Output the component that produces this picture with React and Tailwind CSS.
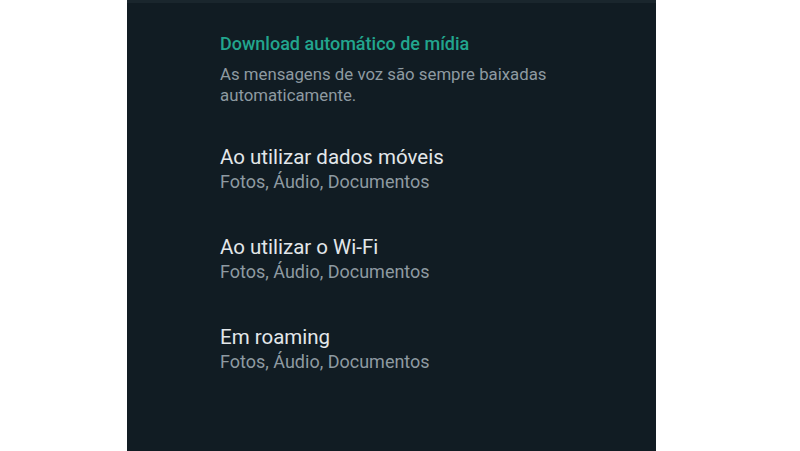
import React from 'react';

const opcoes = [
    { titulo: 'Ao utilizar dados móveis', detalhe: 'Fotos, Áudio, Documentos' },
    { titulo: 'Ao utilizar o Wi-Fi', detalhe: 'Fotos, Áudio, Documentos' },
    { titulo: 'Em roaming', detalhe: 'Fotos, Áudio, Documentos' },
];

const App = () => {
    return (
        <div className="w-[800px] h-[451px] bg-white flex" style={{ fontFamily: 'Roboto, "Noto Sans", sans-serif' }}>
            <div className="ml-[127px] w-[529px] h-full bg-[#111c23] border-t-[3px] border-[#1a262d]">
                <div className="pl-[93px] pr-6 pt-[30px]">
                    <h2 className="text-[18px] leading-[22px] font-medium text-[#22a68e]">
                        Download automático de mídia
                    </h2>
                    <p className="mt-[9px] text-[16.8px] leading-[21px] text-[#8e9aa1] w-[380px]">
                        As mensagens de voz são sempre baixadas automaticamente.
                    </p>
                    <div className="mt-[39px] flex flex-col gap-[41px]">
                        {opcoes.map((op) => (
                            <div key={op.titulo}>
                                <div className="text-[20.5px] leading-[25px] text-[#e3e7ea]">{op.titulo}</div>
                                <div className="text-[18px] leading-[24px] text-[#8e9aa1]">{op.detalhe}</div>
                            </div>
                        ))}
                    </div>
                </div>
            </div>
        </div>
    );
};

export default App;
